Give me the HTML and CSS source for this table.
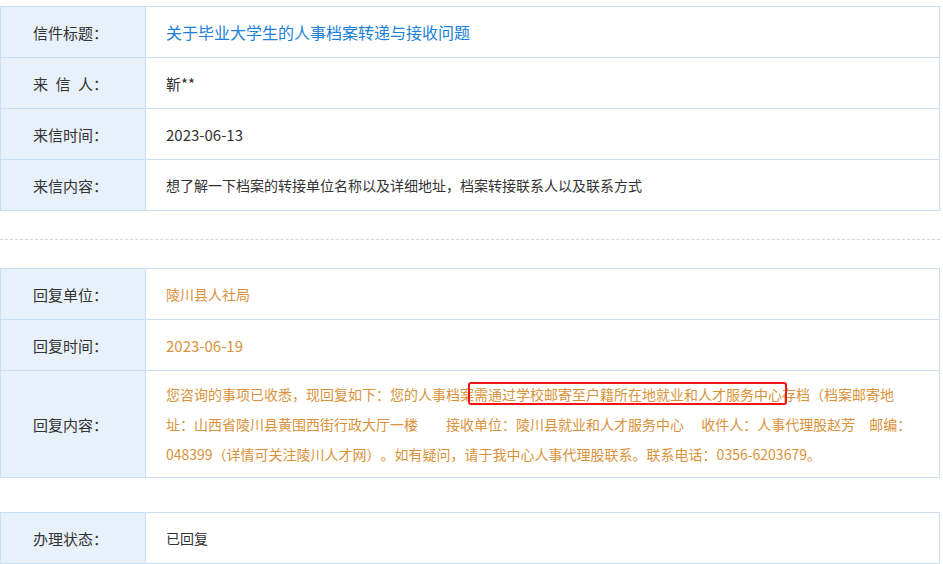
FILE: index.html
```html
<!DOCTYPE html>
<html lang="zh-CN">
<head>
<meta charset="utf-8">
<title>信件详情</title>
<link rel="stylesheet" href="styles.css">
</head>
<body>
<div class="page">
  <div class="sheet">
    <div class="row">
      <div class="label">信件标题：</div>
      <div class="value title">关于毕业大学生的人事档案转递与接收问题</div>
    </div>
    <div class="row">
      <div class="label">来&ensp;信&ensp;人：</div>
      <div class="value big">靳**</div>
    </div>
    <div class="row">
      <div class="label">来信时间：</div>
      <div class="value big">2023-06-13</div>
    </div>
    <div class="row">
      <div class="label">来信内容：</div>
      <div class="value">想了解一下档案的转接单位名称以及详细地址，档案转接联系人以及联系方式</div>
    </div>
  </div>

  <div class="divider"></div>

  <div class="sheet reply">
    <div class="row">
      <div class="label">回复单位：</div>
      <div class="value">陵川县人社局</div>
    </div>
    <div class="row">
      <div class="label">回复时间：</div>
      <div class="value big">2023-06-19</div>
    </div>
    <div class="row">
      <div class="label">回复内容：</div>
      <div class="value para">您咨询的事项已收悉，现回复如下：您的人事档案<span class="mark">需通过学校邮寄至户籍所在地就业和人才服务中心</span>存档（档案邮寄地址：山西省陵川县黄围西街行政大厅一楼　　接收单位：陵川县就业和人才服务中心　 收件人：人事代理股赵芳　邮编：048399（详情可关注陵川人才网）。如有疑问，请于我中心人事代理股联系。联系电话：0356-6203679。</div>
    </div>
  </div>

  <div class="sheet status">
    <div class="row">
      <div class="label">办理状态：</div>
      <div class="value">已回复</div>
    </div>
  </div>
</div>
</body>
</html>
```

FILE: styles.css
```css
* {
  box-sizing: border-box;
}

html, body {
  margin: 0;
  padding: 0;
  background: #ffffff;
}

body {
  font-family: "Microsoft YaHei", "Noto Sans CJK SC", "Noto Sans", sans-serif;
  color: #333333;
  text-spacing-trim: space-all;
  font-kerning: none;
  font-feature-settings: "kern" 0, "chws" 0, "halt" 0, "palt" 0;
}

.page {
  width: 940px;
  padding-top: 6px;
}

.sheet {
  width: 940px;
  border: 1px solid #c9dff1;
  border-bottom: none;
}

.row {
  display: grid;
  grid-template-columns: 145px 1fr;
  border-bottom: 1px solid #c9dff1;
  min-height: 51px;
}

.label {
  display: flex;
  align-items: center;
  padding-left: 32px;
  background: #e8f1f9;
  border-right: 1px solid #c9dff1;
  font-size: 15px;
  color: #333333;
}

.value {
  display: flex;
  align-items: center;
  padding: 0 20px;
  font-size: 14px;
  color: #333333;
}

.value.big {
  font-size: 15px;
}

.value.title {
  font-size: 16px;
  color: #1a80d8;
}

.reply .value {
  color: #d9923a;
}

.value.para {
  display: block;
  padding: 8px 20px;
  line-height: 30px;
}

.mark {
  position: relative;
}

.mark::after {
  content: "";
  position: absolute;
  left: -6px;
  right: -5px;
  top: -2px;
  bottom: -1px;
  border: 2px solid #f01414;
  border-radius: 3px;
}

.divider {
  margin: 28px 0;
  border-top: 1px dashed #d6d6d6;
  width: 940px;
}

.status {
  margin-top: 34px;
}
```
